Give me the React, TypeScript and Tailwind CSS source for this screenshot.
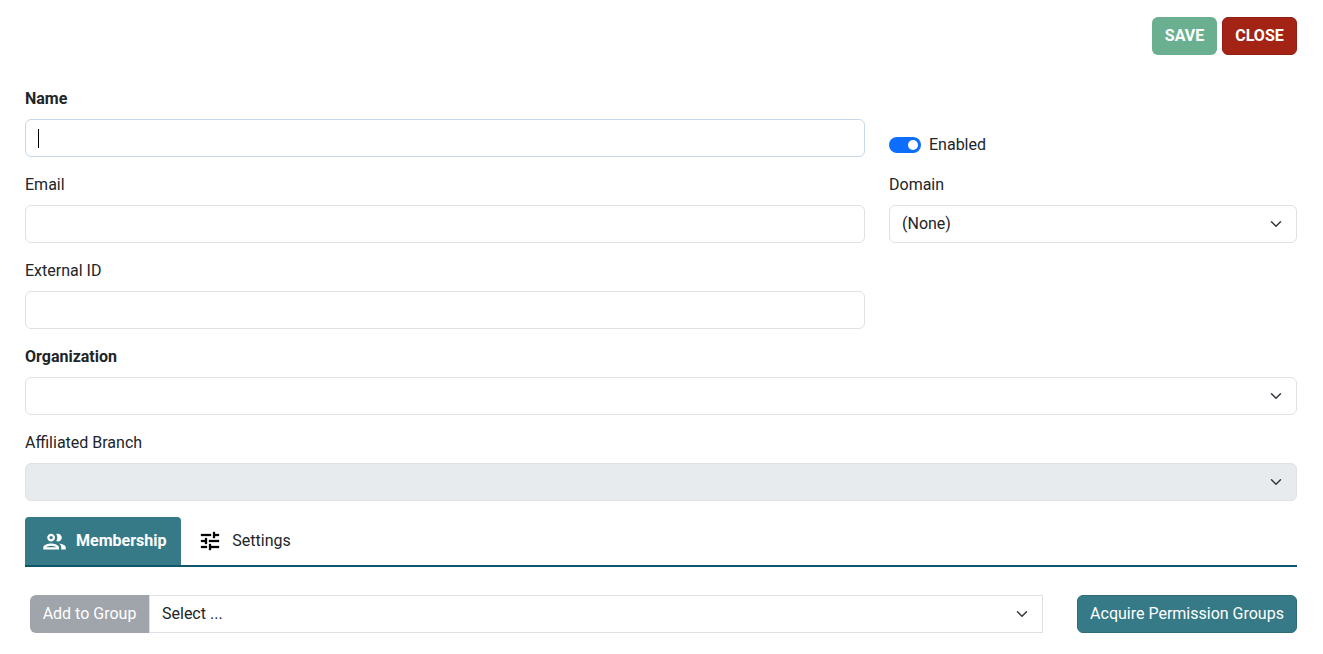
import type { ReactNode } from "react";

function Chevron() {
  return (
    <svg className="h-3 w-4 shrink-0" viewBox="0 0 16 16" fill="none">
      <path
        d="m2 5 6 6 6-6"
        stroke="#343a40"
        strokeWidth="2"
        strokeLinecap="round"
        strokeLinejoin="round"
      />
    </svg>
  );
}

function Field({ label, bold, children }: { label: string; bold?: boolean; children: ReactNode }) {
  return (
    <div className="h-[86px]">
      <div className={bold ? "mb-2 h-6 font-bold" : "mb-2 h-6"}>{label}</div>
      {children}
    </div>
  );
}

function SelectBox({ value, disabled }: { value?: string; disabled?: boolean }) {
  return (
    <div
      className={
        disabled
          ? "flex h-[38px] items-center justify-between rounded-md border border-[#dee2e6] bg-[#e7ebee] px-3"
          : "flex h-[38px] items-center justify-between rounded-md border border-[#dee2e6] bg-white px-3"
      }
    >
      <span>{value}</span>
      <Chevron />
    </div>
  );
}

function TextBox() {
  return <div className="h-[38px] rounded-md border border-[#dee2e6] bg-white" />;
}

export default function App() {
  return (
    <div className="h-[654px] overflow-hidden bg-white pt-[17px] pr-[26px] pl-[25px] font-['Roboto',sans-serif] text-base leading-6 text-[#212529]">
      {/* Actions */}
      <div className="flex justify-end gap-[5px] font-bold text-white">
        <button className="h-[38px] w-[65px] rounded-md bg-[#6ab090]">SAVE</button>
        <button className="h-[38px] w-[75px] rounded-md border border-[#951f12] bg-[#a32415]">CLOSE</button>
      </div>

      {/* Form */}
      <div className="mt-8 grid grid-cols-[840px_1fr] gap-x-6">
        <Field label="Name" bold>
          <div className="flex h-[38px] items-center rounded-md border border-[#c7d7ee] bg-white px-3">
            <span className="h-[19px] w-px bg-black" />
          </div>
        </Field>
        <div className="flex items-center gap-2 pt-[30px]">
          <span className="flex h-4 w-8 items-center justify-end rounded-full bg-[#0d6efd] pr-[3px]">
            <span className="size-[10.5px] rounded-full bg-white" />
          </span>
          <span>Enabled</span>
        </div>
        <Field label="Email">
          <TextBox />
        </Field>
        <Field label="Domain">
          <SelectBox value="(None)" />
        </Field>
        <Field label="External ID">
          <TextBox />
        </Field>
      </div>
      <Field label="Organization" bold>
        <SelectBox />
      </Field>
      <Field label="Affiliated Branch">
        <SelectBox disabled />
      </Field>

      {/* Tabs */}
      <div className="flex h-[50px] border-b-2 border-[#10566a]">
        <div className="flex w-[156px] items-center rounded-t bg-[#367a88] pl-[15.5px] font-bold text-white">
          <svg className="mr-[8.5px] size-[27px]" viewBox="0 0 24 24" fill="currentColor">
            <path d="M9 13.75c-2.34 0-7 1.17-7 3.5V19h14v-1.75c0-2.33-4.66-3.5-7-3.5zM4.34 17c.84-.58 2.87-1.25 4.66-1.25s3.82.67 4.66 1.25H4.34zM9 12c1.93 0 3.5-1.57 3.5-3.5S10.93 5 9 5 5.5 6.57 5.5 8.5 7.07 12 9 12zm0-5c.83 0 1.5.67 1.5 1.5S9.83 10 9 10s-1.5-.67-1.5-1.5S8.17 7 9 7zm7.04 6.81c1.16.84 1.96 1.96 1.96 3.44V19h4v-1.75c0-2.02-3.5-3.17-5.96-3.44zM15 12c1.93 0 3.5-1.57 3.5-3.5S16.93 5 15 5c-.54 0-1.04.13-1.5.35.63.89 1 1.98 1 3.15s-.37 2.26-1 3.15c.46.22.96.35 1.5.35z" />
          </svg>
          Membership
        </div>
        <div className="flex items-center pl-[17px]">
          <svg className="mr-[10.3px] size-6" viewBox="0 0 24 24" fill="black" stroke="black" strokeWidth="0.3">
            <path d="M3 17v2h6v-2H3zM3 5v2h10V5H3zm10 16v-2h8v-2h-8v-2h-2v6h2zM7 9v2H3v2h4v2h2V9H7zm14 4v-2H11v2h10zm-6-4h2V7h4V5h-4V3h-2v6z" />
          </svg>
          Settings
        </div>
      </div>

      {/* Group picker */}
      <div className="mt-7 flex pl-[5px]">
        <button className="h-[38px] w-[119px] rounded-l-md bg-[#9fa5ab] text-white">Add to Group</button>
        <div className="flex h-[38px] w-[894px] items-center justify-between border border-[#dee2e6] px-3">
          <span>Select ...</span>
          <Chevron />
        </div>
        <button className="ml-auto h-[38px] w-[220px] rounded-md border border-[#2f6b78] bg-[#367a88] text-white">
          Acquire Permission Groups
        </button>
      </div>
    </div>
  );
}
